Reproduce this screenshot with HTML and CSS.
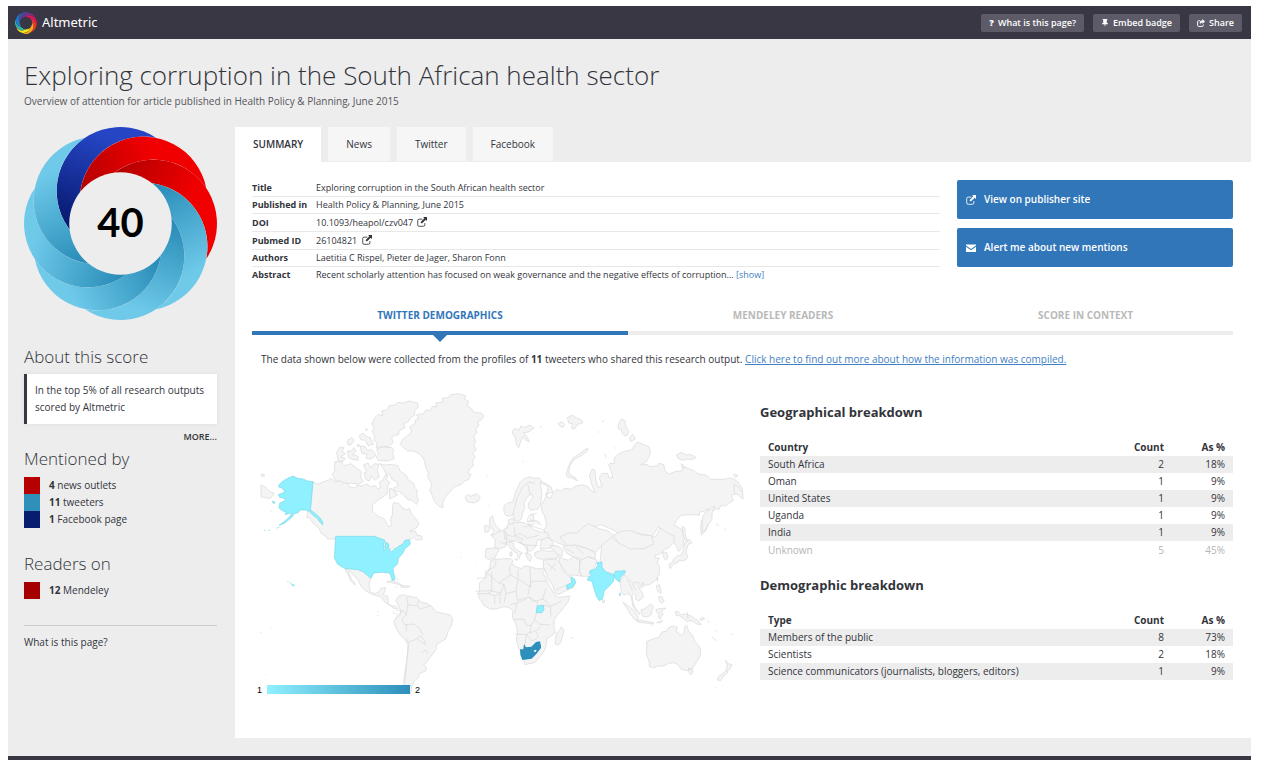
FILE: index.html
```html
<!DOCTYPE html>
<html lang="en">
<head>
<meta charset="utf-8">
<title>Altmetric – Exploring corruption in the South African health sector</title>
<link rel="stylesheet" href="styles.css">
</head>
<body>
<svg class="defs" aria-hidden="true">
  <symbol id="i-external" viewBox="0 0 14 14"><path d="M7.500 3H3a2 2 0 0 0-2 2v6a2 2 0 0 0 2 2h6a2 2 0 0 0 2-2V8.500" fill="none" stroke="currentColor" stroke-width="1.200"/><path d="M8.500 0H14v5.500L12.200 3.700 6.800 9.100 4.900 7.200l5.400-5.400z" fill="currentColor"/></symbol>
  <symbol id="i-share" viewBox="0 0 14 14"><path d="M5 3H3a2 2 0 0 0-2 2v6a2 2 0 0 0 2 2h6a2 2 0 0 0 2-2v-1.500" fill="none" stroke="currentColor" stroke-width="1.700"/><path d="M9.500 0 14 4.300 9.500 8.600V6C6.500 6 5.600 7.200 6 10 3.500 6.500 5 2.700 9.500 2.700z" fill="currentColor"/></symbol>
  <symbol id="i-pin" viewBox="0 0 14 14"><path d="M3 0h8v2h-1v4C11.500 6.700 12.300 7.700 12.300 9H8l-1 5-1-5H1.700c0-1.300.8-2.300 2.300-3V2H3z" fill="currentColor"/></symbol>
  <symbol id="i-mail" viewBox="0 0 14 14"><path d="M0 2h14v1.500L7 8.300 0 3.500zM0 5.200 7 10l7-4.800V12.500H0z" fill="currentColor"/></symbol>
</svg>
<div class="page">
  <header class="topbar">
    <a class="brand" href="#">
      <svg class="brand-logo" viewBox="-290 -290 580 580" aria-hidden="true">
        <defs><path id="leaf" d="M-90.400-37.400A192 192 0 1 1 257.600 106.700 192 192 0 0 0-90.400-37.400z"/></defs>
        <use href="#leaf" transform="rotate(-90)" fill="#3c4fa6"/>
        <use href="#leaf" transform="rotate(-45)" fill="#8a2a86"/>
        <use href="#leaf" transform="rotate(0)" fill="#e0145a"/>
        <use href="#leaf" transform="rotate(45)" fill="#f23a24"/>
        <use href="#leaf" transform="rotate(90)" fill="#fba919"/>
        <use href="#leaf" transform="rotate(135)" fill="#f7e413"/>
        <use href="#leaf" transform="rotate(180)" fill="#35b5a0"/>
        <use href="#leaf" transform="rotate(225)" fill="#1e7fd0"/>
        <circle r="165" fill="#393744"/>
      </svg>
      <span>Altmetric</span>
    </a>
    <nav class="actions">
      <button class="action"><b>?</b>What is this page?</button>
      <button class="action"><svg class="icon-s"><use href="#i-pin"/></svg>Embed badge</button>
      <button class="action"><svg class="icon-s"><use href="#i-share"/></svg>Share</button>
    </nav>
  </header>

  <div class="body">
    <div class="heading">
      <h1>Exploring corruption in the South African health sector</h1>
      <p>Overview of attention for article published in Health Policy &amp; Planning, June 2015</p>
    </div>
    <div class="columns">
      <aside class="sidebar">
        <div class="badge">
          <svg viewBox="-290 -290 580 580" aria-hidden="true">
            <defs>
              <linearGradient id="g-sky" gradientUnits="userSpaceOnUse" x1="-10" y1="-130" x2="260" y2="-40"><stop offset="0" stop-color="#2a8db8"/><stop offset="1" stop-color="#6fcaea"/></linearGradient>
              <linearGradient id="g-red" gradientUnits="userSpaceOnUse" x1="0" y1="-170" x2="200" y2="-60"><stop offset="0" stop-color="#b40000"/><stop offset="1" stop-color="#f00000"/></linearGradient>
              <linearGradient id="g-navy" gradientUnits="userSpaceOnUse" x1="-10" y1="-130" x2="260" y2="-40"><stop offset="0" stop-color="#071a70"/><stop offset="1" stop-color="#2545c4"/></linearGradient>
            </defs>
            <use href="#leaf" transform="rotate(-90)" fill="url(#g-navy)"/>
            <use href="#leaf" transform="rotate(-45)" fill="url(#g-red)"/>
            <use href="#leaf" fill="url(#g-red)"/>
            <use href="#leaf" transform="rotate(45)" fill="url(#g-sky)"/>
            <use href="#leaf" transform="rotate(90)" fill="url(#g-sky)"/>
            <use href="#leaf" transform="rotate(135)" fill="url(#g-sky)"/>
            <use href="#leaf" transform="rotate(180)" fill="url(#g-sky)"/>
            <use href="#leaf" transform="rotate(225)" fill="url(#g-sky)"/>
            <circle r="154" fill="#ededed"/>
          </svg>
          <span class="score">40</span>
        </div>
        <h2 class="about-title">About this score</h2>
        <p class="quote">In the top 5% of all research outputs scored by Altmetric</p>
        <a class="more" href="#">MORE...</a>
        <h2>Mentioned by</h2>
        <ul class="legend mentions">
          <li><i class="sw news"></i><span><b>4</b> news outlets</span></li>
          <li><i class="sw twitter"></i><span><b>11</b> tweeters</span></li>
          <li><i class="sw facebook"></i><span><b>1</b> Facebook page</span></li>
        </ul>
        <h2>Readers on</h2>
        <ul class="legend">
          <li><i class="sw mendeley"></i><span><b>12</b> Mendeley</span></li>
        </ul>
        <a class="what" href="#">What is this page?</a>
      </aside>

      <main class="main">
        <nav class="tabs">
          <a class="tab current" href="#">SUMMARY</a>
          <a class="tab" href="#">News</a>
          <a class="tab" href="#">Twitter</a>
          <a class="tab" href="#">Facebook</a>
        </nav>
        <section class="panel">
          <div class="overview">
            <table class="info">
              <tr><th scope="row">Title</th><td>Exploring corruption in the South African health sector</td></tr>
              <tr><th scope="row">Published in</th><td>Health Policy &amp; Planning, June 2015</td></tr>
              <tr class="linked"><th scope="row">DOI</th><td>10.1093/heapol/czv047 <svg class="icon-m"><use href="#i-external"/></svg></td></tr>
              <tr class="linked"><th scope="row">Pubmed ID</th><td>26104821 <svg class="icon-m"><use href="#i-external"/></svg></td></tr>
              <tr><th scope="row">Authors</th><td>Laetitia C Rispel, Pieter de Jager, Sharon Fonn</td></tr>
              <tr><th scope="row">Abstract</th><td>Recent scholarly attention has focused on weak governance and the negative effects of corruption... <a href="#">[show]</a></td></tr>
            </table>
            <div class="cta">
              <button><svg class="icon-m"><use href="#i-external"/></svg>View on publisher site</button>
              <button><svg class="icon-m"><use href="#i-mail"/></svg>Alert me about new mentions</button>
            </div>
          </div>

          <nav class="subtabs">
            <a class="subtab current" href="#">TWITTER DEMOGRAPHICS</a>
            <a class="subtab second" href="#">MENDELEY READERS</a>
            <a class="subtab third" href="#">SCORE IN CONTEXT</a>
          </nav>
          <p class="intro">The data shown below were collected from the profiles of <b>11</b> tweeters who shared this research output. <a href="#">Click here to find out more about how the information was compiled.</a></p>

          <div class="demographics">
            <figure class="map">
              <svg viewBox="0 0 1500 920" role="img" aria-label="World map of tweeters">
                <!-- North America and Greenland -->
                <g class="land">
                  <path d="M457 158l16-12 12-11-6-16 16-9 2-12 10-4-8-10 22-4 8-12 12 4 6-14 14 2-4-12 22-2-2-12 18-2 6-9 24-3 22 6-4 10 12 6-2 14 14 12 4 8 22 2 8 8-6 12-12 6 4 12-10 8 4 14-10 10 6 16-6 10 8 14-10 8 6 16-8 10 4 14-12 8-6 14 10 4-8 16-12 4-8 10-22 8-16 18-12 14-6 14 0 16-12-4-14-14-6-18-8-18 6-12-4-14-8-10 2-14-8-18-4-20-12-18-20-10-18 0-12-10-10-10z"/>
                  <path d="M375 92l10-10 14 4-4-14 18-4 4-12 20-2 6-8 16 2 18-6 26 6 2 12-12 12 2 12-14 8-6 12-14 6 4 12-16 8-4 14-12 0-8 10 4 12-14 14-14-2-22 4 2-14-10-8 4-12-8-14 6-14-8-8z"/>
                  <path d="M328 146l12-8 10 12 10 2 10 20-16 4-8-16-14-2zM292 160l14-8 6 8-10 14-8 0zM260 196l10-16 12 2-6 10 10 8-14 10 14 4-8 10-14-4zM292 192l12 0 8-10 6 10-10 10 16 6 0 12-20-4-8-4zM330 178l16 0 6 12 14-2 12 16-14 12-16-2 2-14-14 0zM380 186l20-6 26 2 6 8-4 10 4 16-20 6-28-2-6-10 8-8z"/>
                  <path d="M254 224l20 0 10 12 18-6 14 10 18 14-2 18 8 12-16 8-20-4-14 4-20-8-14-2-4-12-6-6 8-14zM340 234l14-6 8 14 12-12 12 2-4 18 6 20-14 10-10-14-6 16-10-4-6-20 8-4zM388 230l18 4 16-2 22 4 6 16 18 12 6 14 16 10 6 16 6 6-2 18 6 10-6 14-14-12-12-2-16-16-14-10-8 4-6-12 14-8-4-12-14-6-8-18-10 2-6-14-8-12z"/>
                  <path d="M189 284l14 8 18-8 14-4 8-7 10 12 16-4 14 8 10-2 4 12 18 4 6-8 14 2 14-6 14 8 12-4 8 10 8-2-2-18 10-6 6-14 8 0-4 14 10 6-6 14-2 22-14 10-10 6-20 16 1 20 8 8 10 8 16 6 8 14 6 10 8-2-2-22 6-14-1-22 4-12 16 2 10 14 14 6 6-6 8 18 12 14 10 14-8 14-20 10 18 0 4 12 14 2 2 10-18 2-8-8-18 12-14 2-6 10-16 10-12-2-14 18-6-18-10-22-26-4-137-1-6-10-12-6-8-18-14-10-14-20-8 0z"/>
                  <path d="M645 330l8-8 8 6 20-8 10 10-6 12-14 6-20-4zM33 263l8-2 3 6-8 2zM33 293l14 8 12 12 14 6-6 8-8 8-26-5zM418 305l8 0 10 14 8 4-14 8-12 4z"/>
                  <path d="M347 124l6 4-4 4zM322 172l8 2-6 6zM708 268l4 0M715 356l3 2"/>
                </g>
                <g class="hot">
                  <path d="M189 284l-16-2-14-6-16-2-14-7-14 6-14 8-12 10-4 8 14 6 6 10-20 8 4 8 18 4-6 8-12 6-2 14 10 8 12 4-4 8 14-4 6 2-10 12-14 12-14 10 16-6 20-16 12-14 10-2 4-8 18 0 8 4 8-2 10 6 14 12 10 14 2 10-8-6-10-14-12-8-8-8z"/>
                  <path d="M66 342l10 4-4 4zM42 430l4 0M54 431l6-2M80 424l8-4M62 370l3 2"/>
                </g>
                <!-- Northern Eurasia -->
                <g class="land" transform="translate(690 0)">
                  <path d="M172 285l10-2 16 6 16 12 4 14-12 4-10 2 4 8 12 4 8-18 10-8 12 6 14-10 16 4 16-10 20-4 16 6 8 10 14 8-8-16-6-20-4-16 8-18 8 2 4 30 6 22 12-2-8-26 8-14 16 0 6 14 10-2-4-18-8-18 4-6 14 0-2-16 14-12 18-8 20-4 10-14 8-10 14 6 20 8 6 14-6 18-8 14-16 8 20 0 8 6 22-2 4-8 16 4 2 18 12 10 22-8 20-2 0-12 30 10 16 12 26 4 12 12 38 0 22-4 12 4 12 10 12 20-2 16-12-4-20 6 6 16-14 8-10 8-14-2-4 12-10-2-12 8-4 20-6 18-10 22-12 12-2-20 2-22 10-16 8-10 4-12-14 8-14 2 0 10-14-2-14 0-28 2-14 18-6 12 10 4 14 10 6 22-4 30-12 12-16-34-26-8-18-32-20 30-30-8-38-2-14 8-10-4-28-16-34-14-28 8-20 12-28 8-8 14 4 14 10 10-14 8-24-12-22-8-20-10-16-14-4-16 8-10-6-30-8-14-2-20 16-26 4-30z"/>
                  <path d="M72 356l12-8 14-4 4-12 4-16 8-16 6-14 14-12 14-4 16 4 14-2 6 10-4 6 6 30-2 14-2 22-8 12-22 4-8-10 2-12 12-16-2-12-12 8-12 20 2 16-6 14-4 18-10 8-10-4-4-18-10 6-12-2-6-12z"/>
                  <path class="cut" d="M98 385l6-24 8-30 16-30 18-16 18 4M150 324l-6-30M172 378l-22 6-8 12 4 18 16-2M102 408l0 40M142 412l22 8 30 10M112 452l30-8"/>
                  <path d="M258 262l4-14 8-20 10-16 20-12 14-12 10-4-2 8-18 14-20 10-14 18-4 20 4 10 14 6 8 12-14-8-16-4zM96 132l10-8 10 6 8-14 8 6 18-8 12 10-14 10-18 4 10 10 8 16-10-4-8-12-8 16-6 18-8-12-2-20-8-8zM234 110l12-6 8 8-6 10-10-6zM262 92l14-8 12 8 18 8 2 8-16 4-8 14-10-2 4-14-12-2zM416 110l8-14 10 4 4 20 8 14-6 14-12-6-4-14-10-4zM448 152l10-10 8 14-14 8zM590 204l14-8 14 8 14-2 16 10-14 6-14-2-12 4-14-6zM604 230l12 10-10 2zM760 265l8-4 6 6-8 4zM762 292l14 8 12 16 1 20-14-12-12-6zM180 119l6 0M355 134l4 2M366 103l6 0M126 222l4 2M736 424l0 4M708 410l10 6M375 200l4 12M404 182l4 2M640 188l2 2"/>
                  <path d="M668 390l8-14 14-8 8-8 6-2-8 22 0 18-10 12-10 18-8 8-2-22z"/>
                  <path d="M606 418l8 4 2 20 8 24-6-4-8-14z"/>
                  <path d="M30 392l8-6 2 16 8 14 10 10 8 16-14 6-18-2 8-14-8-10-6-12zM14 416l12 0 4 10-6 10-10-2zM84 400l14-8 4 12-6 10-10-2z"/>
                </g>
                <!-- Central and South America -->
                <g class="land" transform="translate(0 435)">
                  <path d="M283 103l40 2 16 14 14 2 8 18-4 18 4 22 14 6 12-6 6-10 14-2-4 14-4 8 14 4 2 20 8 8 14 2 6 6-10 2-12-10-14-8-14-18-22-6-24-12-14-14-8-18-14-16zM285 108l8 8 12 26 8 8 2 10-12-12-8-20-8-10z"/>
                  <path d="M410 150l16-5 20 8 12 8-22-6-14-4zM452 164l12-4 16 3-12 4zM436 165l6 1M434 128l4 6M440 138l6 8"/>
                  <path d="M438 206l8-14 14-4 10 4 14 2 18 4 10 12 18 4 14 8 8 10 8 8 16 4 24 4 8 14-4 20-10 16-6 22-16 10-12 8-2 14-14 20-14 18-8 8 8 10-4 10-18 6-2 12-14 12-6 16-8 10-2 12-8 8-4 22-8-6-2-18 6-20 2-32 6-40 4-30 2-32-10-16-14-14-12-20-6-18 6-14 12-6 2-14z"/>
                  <path class="cut" d="M470 195l4 24 28 2 4-16M438 235l20 0 12 14M474 219l-6 30-12 12 6 16 10 2M502 221l8 10 30-8M468 300l2-22 22-2 18 14 8 20M476 330l18-6 16-12 10 8 8 18-14-8-12-10M514 362l12-8 8 12M468 320l8 14-6 60-6 60M428 240l16 10 12-12"/>
                  <path d="M456 468l10-8 16 0 4 14-12 22-12-10zM30 302l4 0M62 290l3 1M382 238l4 1M47 428l3 0M632 75l4 2M677 102l2 2M382 250l3 0"/>
                </g>
                <g class="hot" transform="translate(0 435)">
                  <path d="M257 13l116 0 22 8 10 4-4 12 0 18 4 0 2-24 8 4 2 16 6 8 12-8 14-10 10-4 6-12 12-2 4 8-2 8-14 10-6 14-14 16-2 16-14 14 2 14 4 20-8 2-8-22-24-2-24 2-8 16-10-8-14-12-16-6-40-4-20-12-10-20z"/>
                  <path d="M112 149l4 1M120 152l5 2M125 156l8 4-3 3z"/>
                </g>
                <!-- Africa, Europe, southern Asia and Oceania -->
                <g class="land" transform="translate(630 435)">
                  <path d="M78 50l28-2 12 6-8 12-6 14-20 2-8-6zM92 8l12 0 10-8 18-6 8 12 0 20-4 18-16 6-16-4 2-22zM132-8l12-10 20 2 14-4 16 4 18-2 10 12 20 6 20 2 6 12-14 8-22 2-6 22-14 12-10-2-10-16-14-8-4-10-14 4-14-2-12-4z"/>
                  <path d="M136 32l14-4 10 6 2 10 12 12 14 8-6 2-4 14-6-6 2-8-18-12-10-12zM150 60l6 0 0 12-6 0zM164 80l10 2-4 4zM196 62l12 4 8 10-6 12-8-8zM140-8l4-14 22-6 20-2 22 10M206-50l14-4 2 20-12 4M200-30l12-6 22 4 10 12"/>
                  <path d="M224 62l20-8 18 4 22-2 12 8-4 14-22 2-18 2-20-2-8-10zM244 24l16-8 10 4 8 10 4 14-20 6-22 0 2-10z"/>
                  <path d="M300 15l24-12 26 0 34-28 32 14 28 8 16 14-8 20-26 10-20 20-30-14-32-8-20 4-14-16z"/>
                  <path d="M270 40l24 2 14 12-2 20-12-6-18-16zM310 44l16-4 20 0 30 8 30 14 0 18-22-6-14 10-34-12-14-6-8-10z"/>
                  <path d="M460 10l26-12 24-3 36 14 28 2 10 14-4 12-28 14-42 2-34-18z"/>
                  <path d="M425 40l30-25 20 18 36 18 40-1 30-14-6-20 14-4 12-24 20 14 22 10-2 20-14 14-16 8-10 12-16 4 0 8 14 0-8 12 8 16-2 24-14 18-16 10-12 2-10 8-8-6-14-4-14 6-12-14-2-22-12 2-20 6-28-14-16-20z"/>
                  <path d="M608 60l12 2 4 16-8 6-6-10zM640 82l12-10 14-4 6-20 2-16 14-10 8 10-12 6-6 22 6 16-12 10-14 0-10 10-10-4zM626 98l8-6 4 8-8 10z"/>
                  <path d="M297 75l14 6 14 4 15-10 20 10-2 34 8 14-22-4-14 2-14-12-8-14-10-10zM360 85l24-10 28 10-8 20-12 10-6 18-20 0-8-14z"/>
                  <path d="M250 86l18-4 22 0 12 14 6 18 14 16 12 6 12 14-6 16-22 10-24 12-8-4-8-24-14-20-8-22-6-12z"/>
                  <path d="M480 150l8-14 8-6 10 12 12 12 16-4 8 10-6 6 12 18 2 12-14 10-10-4 2-12-8-6-4 8 4 22 6 14 12 14 0 6-10-10-10-16-4-26-8-12-14 6-8-10z"/>
                  <path d="M488 210l12 8 18 14 10 14 8 14-6 6-12-10-12-18zM530 264l18 2 24 4 10 4-18 0-32-4zM544 232l8 0 10-8 10-8 8 8-4 12-2 12-10 6-14 0-6-10zM588 232l12-2 18-2-14 10 6 10-6 2-2 12-6-4 0-14-8-6zM590 272l18-6-6 6zM590 160l8-2 4 14 2 12-8-4-6-12zM596 194l10 0 6 14-6 6-8-6zM590 138l4 0-2 10zM546 152l6 4-4 4zM572 278l8 2M646 238l10 2 6 8 12-2 20 6 20 14 10 12-14-2-14-10-16 2-8-6-12-10-12-2zM720 260l10-4 4 4-10 6zM740 264l8 8M766 296l6 2M756 316l14 10M812 308l8-4M428 203l6 2-2 8-5-2z"/>
                  <path d="M560 328l16-6 20-6 10-16 12-2 8-12 14-4 12 4-4 12 16 12 8-6 2-20 6-4 6 18 12 12 6 18 12 12 6 14-2 18-10 18-12 18-16 8-18-4-8-12-14-8-16 2-14 8-18 0-14 6-12-4 0-14-8-20zM684 410l14 0 0 14-8 4zM796 384l10 12 10 2-6 14-10 6 0-10 2-8zM798 416l6 6-14 12-8 12-10-2 4-10zM765 466l4 0M330 319l10-2"/>
                  <path d="M304 284l8 10-4 18-6 20-8 8-8-4 0-14 4-18 8-8z"/>
                  <path d="M92 86l16-4 22-2 22 0 6 4-2 12 12 8 16 6 8-8 18 2 20 6 20 0 6 4-8 8 10 18 8 18 10 16 10 18 10 4 34-4-6 18-20 26-14 16-8 14 0 18 4 18-14 12-12 6-1 20-8 20-12 16-16 16-28 6-8-32-12-20-6-22 4-24-6-26-10-18 2-20-12-10-16-2-20 6-18 2-20-10-18-28 2-14 2-28 18-16 12-28z"/>
                  <path class="cut" d="M108 85l-2 18-30 16M76 119l0 18-26 2M76 119l40 34 36-24M152 129l-4-20 6-14M152 129l22 12 0-30M210 106l2 42M174 141l38 24 0-17 46 0M174 141l-6 36M95 120l0 56-48 2M116 153l16 4 6 28M132 157l-10 26-26-6M96 177l-12 8 20 6 0 26M138 185l-6 28M138 185l30-8 4 28 36-10 10 14 34-8M212 148l-8 40M152 218l20-6 26-10M172 212l-8 34M208 195l24 16-2 30-6 22M248 219l24 6 0 30M258 170l-10 30 24 22 20-8 14-8M224 263l-10 16-4 24M160 262l32 0 8 20 14-3M224 263l16 14 30 2M164 306l34 2 12-8M200 308l-6 32M198 306l18 22M210 303l20-8 12-10M216 328l18-12-4-16M84 185l-34 0M104 191l18-6M120 186l0 28M262 94l26 22M288 94l-18 18M316 160l-28 14M500 142l8 12 10 22M518 156l10 20M120 30l20 8M136 6l22 8 22-10M162-14l4 28 22 6M180 4l22 14 34-8M188 20l-6 14 20 6 32 0M202 40l0 24M145 32l20-4 18 6M318 50l24 14M350 46l20 20M682 240l2 20"/>
                </g>
                <g class="hot" transform="translate(630 435)">
                  <path d="M410 92l16-2 0 16 12 14 24 8 4-10 30-2-2 8-12 12-4 14-12-10-4-10-2 18-14 16-14 14-4 22-10 6-8-12-8-24-6-22-14-4 4-10 8-2-6-14 18-8 8-10z"/>
                  <path d="M333 135l10 5 4 12-8 12-18 8-2-12 16-8zM232 222l18-2 2 12-6 10-18 0zM478 184l3 0-1 8z"/>
                </g>
                <path class="top-country" transform="translate(630 435)" d="M180 352l10 0 2-16 6 10 16-2 14-14 12-2 3 14 0 6-14 18-14 14-28 4-6-16zM220 357l6 4 4-6-4-2z"/>
              </svg>
              <figcaption class="scale"><span>1</span><i></i><span>2</span></figcaption>
            </figure>

            <div class="tables">
              <h3>Geographical breakdown</h3>
              <table class="data">
                <thead><tr><th>Country</th><th>Count</th><th>As %</th></tr></thead>
                <tbody>
                  <tr><td>South Africa</td><td>2</td><td>18%</td></tr>
                  <tr><td>Oman</td><td>1</td><td>9%</td></tr>
                  <tr><td>United States</td><td>1</td><td>9%</td></tr>
                  <tr><td>Uganda</td><td>1</td><td>9%</td></tr>
                  <tr><td>India</td><td>1</td><td>9%</td></tr>
                  <tr class="unknown"><td>Unknown</td><td>5</td><td>45%</td></tr>
                </tbody>
              </table>
              <h3>Demographic breakdown</h3>
              <table class="data">
                <thead><tr><th>Type</th><th>Count</th><th>As %</th></tr></thead>
                <tbody>
                  <tr><td>Members of the public</td><td>8</td><td>73%</td></tr>
                  <tr><td>Scientists</td><td>2</td><td>18%</td></tr>
                  <tr><td>Science communicators (journalists, bloggers, editors)</td><td>1</td><td>9%</td></tr>
                </tbody>
              </table>
            </div>
          </div>
        </section>
      </main>
    </div>
  </div>
  <footer class="footer"></footer>
</div>
</body>
</html>
```
FILE: styles.css
```css
* { box-sizing: border-box; margin: 0; padding: 0; }
body { background: #fff; color: #32343b; font: 10px/17px "Open Sans", "Noto Sans", sans-serif; }
a { color: inherit; text-decoration: none; }
button { border: 0; font: inherit; cursor: pointer; }
ul { list-style: none; }
.defs { display: none; }
.page { padding: 6px 15px 6px 8px; }

.topbar { display: flex; align-items: center; justify-content: space-between; height: 33px; padding: 0 9px 0 7px; background: #393744; color: #fff; }
.brand { display: flex; align-items: center; gap: 5px; font-family: "Noto Sans", sans-serif; font-size: 13px; }
.brand-logo { width: 22px; height: 22px; }
.actions { display: flex; gap: 9px; }
.action { display: flex; align-items: center; gap: 4px; height: 18px; padding: 0 8px; border-radius: 2px; background: #5d5b68; color: #fff; font-size: 9px; font-weight: 600; }
.icon-s { width: 8px; height: 8px; }
.icon-m { width: 10px; height: 10px; }

.body { padding: 19px 0 18px; background: #ededed; }
.heading { padding-left: 16px; }
h1 { margin-bottom: 1px; font-size: 26px; font-weight: 300; line-height: 34px; }
.heading p { color: #55565c; line-height: 16px; }
.columns { display: grid; grid-template-columns: 193px minmax(0, 1fr); gap: 18px; margin-top: 18px; padding-left: 16px; }

.badge { display: grid; place-items: center; }
.badge > * { grid-area: 1 / 1; }
.badge svg { width: 193px; height: 193px; }
.score { padding-bottom: 4px; color: #000; font: 700 40px/48px Lato, sans-serif; }
h2 { font-size: 17px; font-weight: 300; line-height: 24px; }
.about-title { margin-top: 25px; }
.quote { margin-top: 5px; padding: 8px 4px 8px 8px; border-left: 3px solid #393744; background: #fff; box-shadow: 0 0 4px #ddd; }
.more { display: block; margin: 4px 0 2px; text-align: right; font-size: 9px; font-weight: 600; }
.legend { margin-top: 6px; }
.mentions { margin-bottom: 24px; }
.legend li { display: flex; gap: 9px; }
.sw { width: 16px; height: 17px; }
.news { background: #b60000; }
.twitter { background: #2f90b9; }
.facebook { background: #071d70; }
.mendeley { background: #a60000; }
.what { display: block; margin-top: 26px; padding-top: 8px; border-top: 1px solid #ccc; }

.tabs { display: flex; gap: 7px; }
.tab { height: 35px; padding: 0 18px; background: #f6f6f6; border-bottom: 1px solid #ededed; line-height: 34px; }
.tab.current { background: #fff; border-color: #fff; font-weight: 600; }
.panel { padding: 17px 18px 41px 17px; background: #fff; }
.overview { display: grid; grid-template-columns: minmax(0, 1fr) 276px; gap: 17px; align-items: start; }
.info { width: 100%; margin-top: 1px; border-collapse: collapse; font-size: 9px; line-height: 16px; text-align: left; }
.info tr + tr { border-top: 1px solid #e8e8e8; }
.info .linked { line-height: 17px; }
.info th { width: 64px; font-weight: 700; white-space: nowrap; }
.info .icon-m { margin-left: 2px; vertical-align: -1px; }
.info a { color: #3f80c4; }
.cta { display: grid; gap: 9px; padding-top: 1px; }
.cta button { display: flex; align-items: center; gap: 8px; height: 39px; padding: 0 9px; border-radius: 2px; background: #3276ba; color: #fff; font-weight: 600; }

.subtabs { display: flex; margin-top: 19px; text-align: center; font-weight: 700; }
.subtab { position: relative; flex: 295; padding: 5px 0 7px; border-bottom: 4px solid #ededed; color: #b9b9b9; }
.subtab.second { flex-grow: 310; }
.subtab.current { flex-grow: 376; border-color: #3276ba; color: #3276ba; }
.subtab.current::after { content: ""; position: absolute; left: 50%; top: 100%; margin: 3px 0 0 -8px; border: 8px solid transparent; border-top-color: #3276ba; border-bottom: 0; }
.intro { margin: 16px 0 0 9px; }
.intro a { color: #3f80c4; text-decoration: underline; }

.demographics { display: grid; grid-template-columns: 500fr 473fr; gap: 10px; margin: 19px 0 0 -2px; }
.map svg { display: block; width: 100%; }
.land path { fill: #f4f4f4; stroke: #d8d8d8; stroke-width: 2; stroke-linejoin: round; }
.land .cut { fill: none; }
.hot path { fill: #8ff0ff; stroke: #79d6e6; stroke-width: 2; stroke-linejoin: round; }
.top-country { fill: #2d8fbb; fill-rule: evenodd; }
.scale { display: flex; align-items: center; gap: 5px; margin: -11px 0 0 7px; color: #000; font: 9px/14px "Liberation Sans", Arial, sans-serif; }
.scale i { width: 143px; height: 9px; background: linear-gradient(90deg, #8ff0ff, #2d8fbb); }
.tables { padding-top: 16px; }
h3 { font-size: 13px; line-height: 18px; font-weight: 700; }
.data { width: 100%; margin: 18px 0 17px; border-collapse: collapse; line-height: 17px; }
.data th, .data td { padding: 0 8px; text-align: left; }
.data th { font-weight: 700; }
.data :is(th, td):not(:first-child) { width: 61px; text-align: right; }
.data tbody tr:nth-child(odd) { background: #ededed; }
.data .unknown { color: #b5b5b5; }
.data .unknown td { padding-top: 1px; }
.footer { height: 4px; background: #393744; }
```
